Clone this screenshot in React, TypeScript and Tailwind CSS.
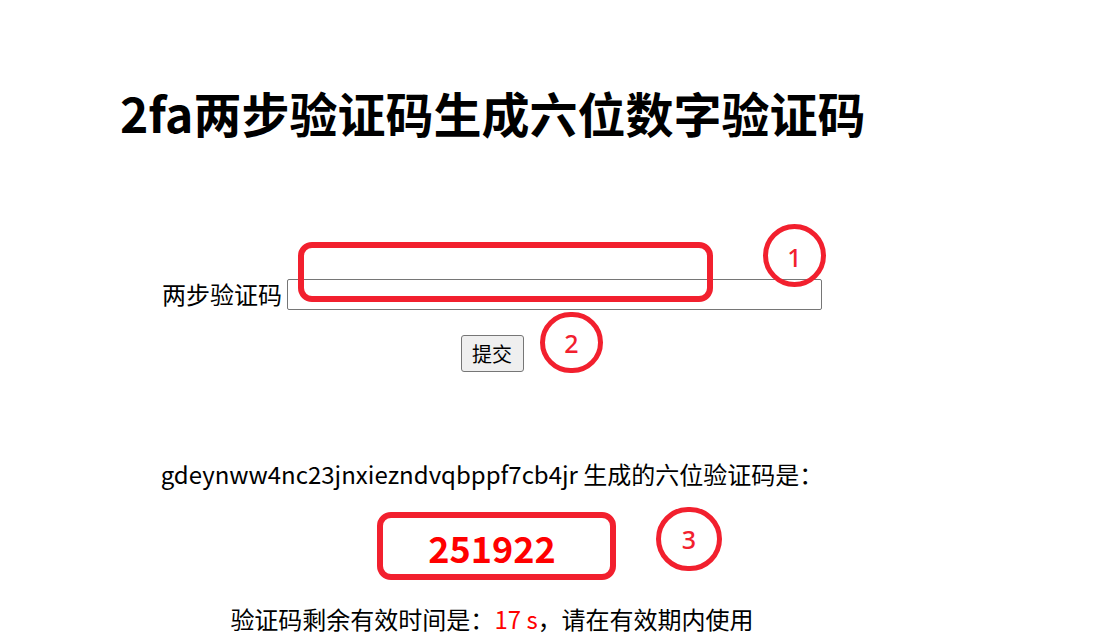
import React from "react";

const font = { fontFamily: '"Noto Sans CJK SC", "Noto Sans", sans-serif' };

export default function App() {
  return (
    <div className="relative h-[635px] w-[1120px] overflow-hidden bg-white text-black" style={font}>
      <div className="ml-[120px] w-[744px] pt-[88px]">
        <h1 className="text-[48px] font-bold leading-[48px] whitespace-nowrap">
          2fa两步验证码生成六位数字验证码
        </h1>

        <div className="mt-[142px] flex h-[32px] items-center justify-center text-[24px] leading-[24px]">
          <label>两步验证码</label>
          <input
            type="text"
            className="ml-[5px] h-[31px] w-[535px] rounded-[2px] border border-[#767676] bg-white outline-none"
          />
        </div>

        <div className="mt-[25px] flex justify-center">
          <button className="h-[37px] w-[63px] rounded-[3px] border border-[#767676] bg-[#efefef] text-[20px] leading-[20px]">
            提交
          </button>
        </div>

        <p className="mt-[90px] text-center text-[24px] leading-[24px] whitespace-nowrap">
          gdeynww4nc23jnxiezndvqbppf7cb4jr 生成的六位验证码是：
        </p>

        <p className="mt-[43px] text-center text-[36px] leading-[36px] font-bold text-[#ff0000]">
          251922
        </p>

        <p className="mt-[42px] text-center text-[24px] leading-[24px] whitespace-nowrap">
          验证码剩余有效时间是：<span className="text-[#ff0000]">17 s</span>，请在有效期内使用
        </p>
      </div>

      {/* annotations */}
      <Box className="left-[298px] top-[242px] h-[60px] w-[415px]" />
      <Mark className="left-[763px] top-[224px] h-[63px] w-[63px] pt-[4px]" n="1" />
      <Mark className="left-[540px] top-[312px] h-[61px] w-[63px] pt-[2px]" n="2" />
      <Box className="left-[377px] top-[512px] h-[68px] w-[239px]" />
      <Mark className="left-[656px] top-[507px] h-[64px] w-[66px]" n="3" />
    </div>
  );
}

function Box({ className }: { className: string }) {
  return <div className={`absolute rounded-[14px] border-[6px] border-[#f2202e] ${className}`} />;
}

function Mark({ className, n }: { className: string; n: string }) {
  return (
    <div
      className={`absolute flex items-center justify-center rounded-full border-[5px] border-[#f2202e] text-[25px] font-medium leading-none text-[#f2202e] ${className}`}
      style={{ fontFamily: '"Noto Sans", sans-serif' }}
    >
      {n}
    </div>
  );
}
